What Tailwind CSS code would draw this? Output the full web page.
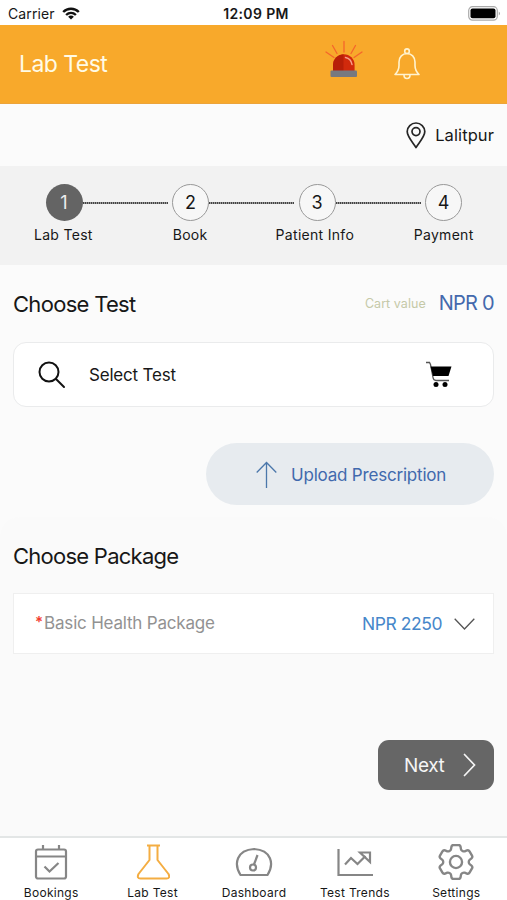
<!DOCTYPE html>
<html lang="en">
<head>
<meta charset="utf-8">
<title>Lab Test</title>
<script src="https://cdn.jsdelivr.net/npm/@tailwindcss/browser@4"></script>
</head>
<body class="w-[507px] h-[900px] overflow-hidden flex flex-col bg-[#fbfbfb] text-[#171717] font-['Inter','Liberation_Sans',sans-serif] whitespace-nowrap">
  <!-- Status bar -->
  <div class="h-[25px] shrink-0 bg-white grid grid-cols-3 items-center pl-2 pr-1.5 pt-[3px]">
    <div class="flex items-center gap-[7px]">
      <span class="text-[14px] leading-5 tracking-[0.1px]">Carrier</span>
      <svg class="mt-[-2px]" width="18" height="13" viewBox="0 0 18 13" fill="none" stroke="#111" stroke-width="2.4"><path d="M1.2 5C5.5.6 12.5.6 16.800 5M4.100 8C7 5.200 11 5.200 13.900 8"/><path d="M9 12.500 6.100 9.700C7.700 8.100 10.300 8.100 11.900 9.700Z" fill="#111" stroke="none"/></svg>
    </div>
    <span class="text-[14px] leading-5 font-semibold text-center tracking-[0.35px] pl-[3px]">12:09 PM</span>
    <svg class="justify-self-end mt-[-2px]" width="33" height="15" viewBox="0 0 33 15"><rect x=".7" y=".7" width="28.600" height="13.400" rx="3.800" fill="#fff" stroke="#aaa" stroke-width="1.200"/><rect x="2.500" y="2.500" width="25" height="9.800" rx="2" fill="#000"/><path d="M30.800 5.500Q33 7.500 30.800 9.500Z" fill="#999"/></svg>
  </div>

  <!-- App header -->
  <header class="h-[79px] shrink-0 bg-[#f8a92b] border-b border-[#eca43a] flex items-center pl-[19px] pr-[87px]">
    <h1 class="text-[23px] leading-7 text-[#fffbe6] tracking-[-0.55px] flex-1">Lab Test</h1>
    <svg class="mt-[-10px] mr-[31px]" width="38" height="38" viewBox="0 0 38 38" fill="none"><g stroke="#f5662b" stroke-width="1.300" stroke-linecap="round"><path d="M19 1.500V12M7.500 5.500 12 13.500M30.500 5.500 26 13.500M1 12l8 5.500M37 12l-8 5.500"/></g><path d="M8 31V25a10.800 10.800 0 0 1 21.600 0v6Z" fill="#d12a0c"/><path d="M8 31V25A10.800 10.800 0 0 1 18.500 14.200V31Z" fill="#b71f08"/><path d="M20.500 17.500q5.500 1 6.500 7" stroke="#f6a08c" stroke-width="1.500" stroke-linecap="round"/><rect x="5.500" y="30.500" width="26.500" height="6.500" rx="1" fill="#777980"/></svg>
    <svg width="26" height="32" viewBox="0 0 26 32" fill="none" stroke="#fff3cf" stroke-width="1.600" stroke-linejoin="round"><circle cx="13" cy="3.200" r="2.300"/><path d="M1 26.500c3-3 4-5 4-9V14c0-5 3.500-8.500 8-8.500s8 3.500 8 8.500v3.500c0 4 1 6 4 9ZM10 27c0 4.700 6 4.700 6 0"/></svg>
  </header>

  <!-- Location -->
  <div class="h-[62px] shrink-0 flex items-center justify-end gap-[9px] pr-[13px]">
    <svg width="20" height="27" viewBox="0 0 20 27" fill="none" stroke="#262626" stroke-width="1.700"><path d="M10 25.500C6 19.500 1.200 14.500 1.200 9.600a8.800 8.600 0 0 1 17.600 0C18.800 14.500 14 19.500 10 25.500Z" stroke-linejoin="round"/><circle cx="10" cy="9.600" r="4"/></svg>
    <span class="text-[16.5px] leading-6 tracking-[0.1px]">Lalitpur</span>
  </div>

  <!-- Stepper -->
  <div class="h-[99px] shrink-0 bg-[#f2f2f2] pt-[18px]">
    <div class="flex items-center pl-[45.500px] text-[18px]">
      <div class="size-[37px] shrink-0 rounded-full bg-[#646464] text-[#eee] flex items-center justify-center">1</div>
      <div class="w-[85px] mr-[4.500px] h-[2px] bg-[repeating-linear-gradient(90deg,#444_0_1px,#999_1px_2px)]"></div>
      <div class="size-[37px] shrink-0 rounded-full bg-[#f7f7f7] border border-[#999] flex items-center justify-center">2</div>
      <div class="w-[85px] mr-[4.500px] h-[2px] bg-[repeating-linear-gradient(90deg,#444_0_1px,#999_1px_2px)]"></div>
      <div class="size-[37px] shrink-0 rounded-full bg-[#f7f7f7] border border-[#999] flex items-center justify-center">3</div>
      <div class="w-[85px] mr-[4.500px] h-[2px] bg-[repeating-linear-gradient(90deg,#444_0_1px,#999_1px_2px)]"></div>
      <div class="size-[37px] shrink-0 rounded-full bg-[#f7f7f7] border border-[#999] flex items-center justify-center">4</div>
    </div>
    <div class="grid grid-cols-4 mt-1 text-[14px] leading-5 text-center tracking-[0.3px]">
      <span>Lab Test</span><span>Book</span><span class="pr-1">Patient Info</span><span>Payment</span>
    </div>
  </div>

  <!-- Choose test -->
  <section class="h-[252px] shrink-0 px-[13px] pt-[24px]">
    <div class="flex items-center h-[30px]">
      <h2 class="text-[22px] leading-[30px] tracking-[-0.7px] flex-1">Choose Test</h2>
      <span class="text-[12.5px] text-[#c5c9a8] mr-[13px] mt-px tracking-[0.05px]">Cart value</span>
      <span class="text-[20px] leading-6 text-[#4469ad] tracking-[-0.75px] mt-[-3px]">NPR 0</span>
    </div>
    <div class="mt-[23px] h-[65px] bg-white border border-[#eaebec] rounded-[13px] flex items-center pl-6 pr-[42px]">
      <svg width="28" height="28" viewBox="0 0 28 28" fill="none" stroke="#111" stroke-width="2" stroke-linecap="round"><circle cx="11" cy="11" r="9.500"/><path d="m18 18 8 8"/></svg>
      <span class="ml-[23px] flex-1 text-[17px] leading-6 tracking-[-0.2px]">Select Test</span>
      <svg class="mr-[-1px]" width="27" height="27" viewBox="0 0 27 27" fill="none"><path d="M1 1.500h3.500l1 2L8 16.500q.5 3 3 3h13" stroke="#555" stroke-width="1.300"/><path d="M5.500 5.500H26.500L23.500 15H8Z" fill="#000"/><circle cx="11" cy="23.500" r="2.500" fill="#000"/><circle cx="20" cy="23.500" r="2.500" fill="#000"/></svg>
    </div>
    <div class="mt-9 ml-auto w-[288px] h-[62px] rounded-[31px] bg-[#e7ebef] flex items-center pl-[50px] gap-[14px] text-[#4169ad]">
      <svg width="21" height="27" viewBox="0 0 21 27" fill="none" stroke="#4b77ab" stroke-width="1.300"><path d="M10.500 27V1.500M.7 11.500l9.800-10 9.800 10"/></svg>
      <span class="text-[17px] leading-6 tracking-[-0.2px] mt-px">Upload Prescription</span>
    </div>
  </section>

  <!-- Choose package -->
  <section class="flex-1 bg-[#fafafa] rounded-t-[20px] px-[13px] pt-6 flex flex-col">
    <h2 class="text-[22px] leading-[30px] tracking-[-0.75px]">Choose Package</h2>
    <div class="mt-[22px] h-[61px] shrink-0 bg-white border border-[#efefef] flex items-center pl-[21px] pr-[18px]">
      <span class="text-[#f23b2f] text-[15px] leading-6 font-semibold mt-[-3px] mr-px">*</span>
      <span class="text-[#929292] text-[17px] leading-6 tracking-[-0.2px] flex-1 mt-[-1px]">Basic Health Package</span>
      <span class="text-[#4687ca] text-[17.500px] leading-6 tracking-[-0.45px]">NPR 2250</span>
      <svg class="ml-3" width="21" height="12" viewBox="0 0 21 12" fill="none" stroke="#555" stroke-width="1.300"><path d="m.7.7 9.800 10.300L20.300.7"/></svg>
    </div>
    <button class="mt-[86px] ml-auto w-[116px] h-[50px] shrink-0 rounded-[11px] bg-[#666] text-[#f5f5f5] flex items-center pl-[26px] pr-[18px] justify-between">
      <span class="text-[19px] leading-6 tracking-[-0.4px] mt-px">Next</span>
      <svg width="13" height="24" viewBox="0 0 13 24" fill="none" stroke="#f5f5f5" stroke-width="1.700" stroke-linecap="round"><path d="m1.500 1.500 10 10.500-10 10.500"/></svg>
    </button>
  </section>

  <!-- Tab bar -->
  <nav class="h-16 shrink-0 bg-white border-t-2 border-[#e3e6e6] grid grid-cols-5 text-[12px] leading-4 tracking-[0.3px] text-center">
    <div class="flex flex-col items-center pt-1.5 gap-[5px] pl-px">
      <svg width="34" height="36" viewBox="0 0 34 36" fill="none" stroke="#868686" stroke-width="2.200"><rect x="2" y="5.500" width="30" height="29" rx="2"/><path d="M2 12.500h30M9 1v5M25 1v5M10.500 22.500l5 5 9-8.500" /></svg>
      <span>Bookings</span>
    </div>
    <div class="flex flex-col items-center pt-1.5 gap-[5px] pl-px">
      <svg width="34" height="36" viewBox="0 0 34 36" fill="none" stroke="#f4ad42" stroke-width="2" stroke-linejoin="round"><path d="M11 1.500h13M13.500 1.500v14.500L2.500 30q-2 4.500 2 4.500h26q4 0 2-4.500L21.500 16V1.500"/></svg>
      <span>Lab Test</span>
    </div>
    <div class="flex flex-col items-center pt-1.5 gap-[5px] pl-px">
      <svg width="38" height="36" viewBox="0 0 38 36" fill="none" stroke="#868686" stroke-width="2.200" stroke-linejoin="round"><path d="M5.500 31C-1.500 20 1.500 6 19 5c17.500 1 20.500 15 13.500 26Z"/><circle cx="18" cy="23.500" r="3"/><path d="m19 20.500 3.500-9.500"/></svg>
      <span>Dashboard</span>
    </div>
    <div class="flex flex-col items-center pt-1.5 gap-[5px]">
      <svg width="36" height="36" viewBox="0 0 36 36" fill="none" stroke="#868686" stroke-width="2.200"><path d="M1.500 5v26H36M8 20.500l6-6.500 6.500 6 8-8"/><path d="M23 8.500h10v9.500Z"/></svg>
      <span>Test Trends</span>
    </div>
    <div class="flex flex-col items-center pt-1.5 gap-[5px]">
      <svg width="36" height="36" viewBox="2.500 2.500 19 19" fill="none" stroke="#868686" stroke-width="1.250" stroke-linejoin="round"><path d="M9.594 3.940c.09-.542.56-.94 1.110-.94h2.593c.55 0 1.020.398 1.110.94l.213 1.281c.063.374.313.686.645.870.074.040.147.083.220.127.325.196.720.257 1.075.124l1.217-.456a1.125 1.125 0 0 1 1.370.490l1.296 2.247a1.125 1.125 0 0 1-.260 1.431l-1.003.827c-.293.241-.438.613-.430.992a7.723 7.723 0 0 1 0 .255c-.008.378.137.750.430.991l1.004.827c.424.350.534.955.260 1.430l-1.298 2.247a1.125 1.125 0 0 1-1.369.491l-1.217-.456c-.355-.133-.750-.072-1.076.124a6.470 6.470 0 0 1-.220.128c-.331.183-.581.495-.644.869l-.213 1.281c-.090.543-.560.940-1.110.940h-2.594c-.550 0-1.019-.398-1.110-.940l-.213-1.281c-.062-.374-.312-.686-.644-.870a6.520 6.520 0 0 1-.220-.127c-.325-.196-.720-.257-1.076-.124l-1.217.456a1.125 1.125 0 0 1-1.369-.490l-1.297-2.247a1.125 1.125 0 0 1 .260-1.431l1.004-.827c.292-.240.437-.613.430-.991a6.932 6.932 0 0 1 0-.255c.007-.380-.138-.751-.430-.992l-1.004-.827a1.125 1.125 0 0 1-.260-1.430l1.297-2.247a1.125 1.125 0 0 1 1.370-.491l1.216.456c.356.133.751.072 1.076-.124.072-.044.146-.086.220-.128.332-.183.582-.495.644-.869l.214-1.280Z"/><circle cx="12" cy="12" r="3.200"/></svg>
      <span>Settings</span>
    </div>
  </nav>
</body>
</html>
